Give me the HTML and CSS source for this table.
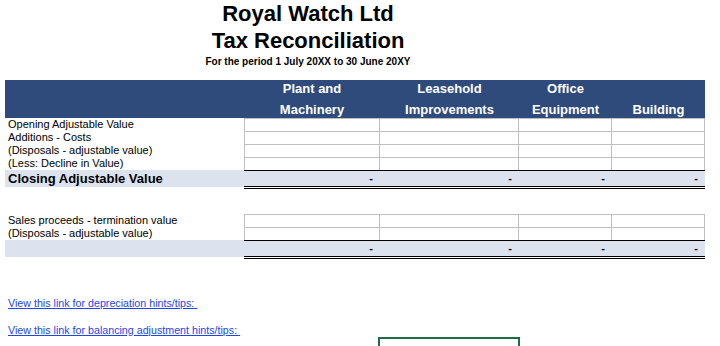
FILE: index.html
```html
<!DOCTYPE html>
<html lang="en">
<head>
<meta charset="utf-8">
<title>Royal Watch Ltd - Tax Reconciliation</title>
<link rel="stylesheet" href="styles.css">
</head>
<body>
<div class="sheet">
  <header class="title">
    <div class="t1">Royal Watch Ltd</div>
    <div class="t1">Tax Reconciliation</div>
    <div class="t2">For the period 1 July 20XX to 30 June 20XY</div>
  </header>

  <div class="grid head">
    <div class="hc"></div>
    <div class="hc"><span>Plant and</span><span>Machinery</span></div>
    <div class="hc"><span>Leasehold</span><span>Improvements</span></div>
    <div class="hc"><span>Office</span><span>Equipment</span></div>
    <div class="hc"><span>Building</span></div>
  </div>

  <div class="grid row">
    <div class="lab">Opening Adjustable Value</div>
    <div class="c first"></div><div class="c"></div><div class="c"></div><div class="c"></div>
  </div>
  <div class="grid row">
    <div class="lab">Additions - Costs</div>
    <div class="c first"></div><div class="c"></div><div class="c"></div><div class="c"></div>
  </div>
  <div class="grid row">
    <div class="lab">(Disposals - adjustable value)</div>
    <div class="c first"></div><div class="c"></div><div class="c"></div><div class="c"></div>
  </div>
  <div class="grid row">
    <div class="lab">(Less: Decline in Value)</div>
    <div class="c first"></div><div class="c"></div><div class="c"></div><div class="c"></div>
  </div>
  <div class="grid total">
    <div class="tlab">Closing Adjustable Value</div>
    <div class="n">-</div><div class="n">-</div><div class="n">-</div><div class="n">-</div>
  </div>

  <div class="grid row section">
    <div class="lab">Sales proceeds - termination value</div>
    <div class="c first"></div><div class="c"></div><div class="c"></div><div class="c"></div>
  </div>
  <div class="grid row">
    <div class="lab">(Disposals - adjustable value)</div>
    <div class="c first"></div><div class="c"></div><div class="c"></div><div class="c"></div>
  </div>
  <div class="grid total">
    <div class="tlab"></div>
    <div class="n">-</div><div class="n">-</div><div class="n">-</div><div class="n">-</div>
  </div>

  <div class="links">
    <a class="link" href="#depreciation">View this link for depreciation hints/tips: </a>
    <a class="link" href="#balancing">View this link for balancing adjustment hints/tips: </a>
  </div>

  <div class="grid selrow">
    <div></div><div></div><div class="sel"></div>
  </div>
</div>
</body>
</html>
```

FILE: styles.css
```css
html, body {
  margin: 0;
  padding: 0;
  background: #ffffff;
  overflow: hidden;
}

body {
  font-family: "Liberation Sans", Arial, sans-serif;
  color: #000000;
}

.sheet {
  width: 720px;
  height: 346px;
  overflow: hidden;
}

.title {
  width: 616px;
  text-align: center;
  font-weight: bold;
  margin-bottom: 10px;
}

.t1 {
  font-size: 22px;
  line-height: 27px;
}

.t2 {
  font-size: 10px;
  line-height: 16px;
}

.grid {
  display: grid;
  grid-template-columns: 239px 136px 139px 93px 93px;
  margin-left: 5px;
  width: 700px;
}

.head {
  height: 38px;
  background: #2f4b7c;
}

.hc {
  display: flex;
  flex-direction: column;
  justify-content: flex-end;
  align-items: center;
  color: #ffffff;
  font-weight: bold;
  font-size: 13px;
  line-height: 14px;
  gap: 7px;
  padding-bottom: 1px;
}

.row {
  height: 13px;
}

.row > div {
  box-sizing: border-box;
  height: 13px;
}

.lab {
  font-size: 11px;
  line-height: 13px;
  padding-left: 3px;
  white-space: nowrap;
}

.c {
  border-top: 1px solid #bfbfbf;
  border-right: 1px solid #bfbfbf;
}

.c.first {
  border-left: 1px solid #bfbfbf;
}

.total {
  height: 19px;
}

.tlab {
  height: 17px;
  background: #dce3ef;
  font-size: 13px;
  font-weight: bold;
  line-height: 17px;
  padding-left: 3px;
  white-space: nowrap;
}

.n {
  box-sizing: border-box;
  height: 19px;
  background: #dce3ef;
  background-clip: padding-box;
  border-top: 1px solid #000000;
  border-bottom: 3px double #000000;
  text-align: right;
  padding-right: 7px;
  font-size: 11px;
  font-weight: bold;
  line-height: 15px;
}

.section {
  margin-top: 25px;
}

.links {
  display: flex;
  flex-direction: column;
  align-items: flex-start;
  gap: 13.5px;
  margin-top: 37.5px;
  padding-left: 8px;
}

.link {
  font-size: 10.7px;
  line-height: 13.5px;
  color: #1f45e6;
  text-decoration: underline;
  white-space: pre;
}

.selrow {
  grid-template-columns: 373px 0px 142px;
  height: 10px;
}

.sel {
  box-sizing: border-box;
  height: 10px;
  border: 2px solid #1e6b45;
  border-bottom: none;
}
```
